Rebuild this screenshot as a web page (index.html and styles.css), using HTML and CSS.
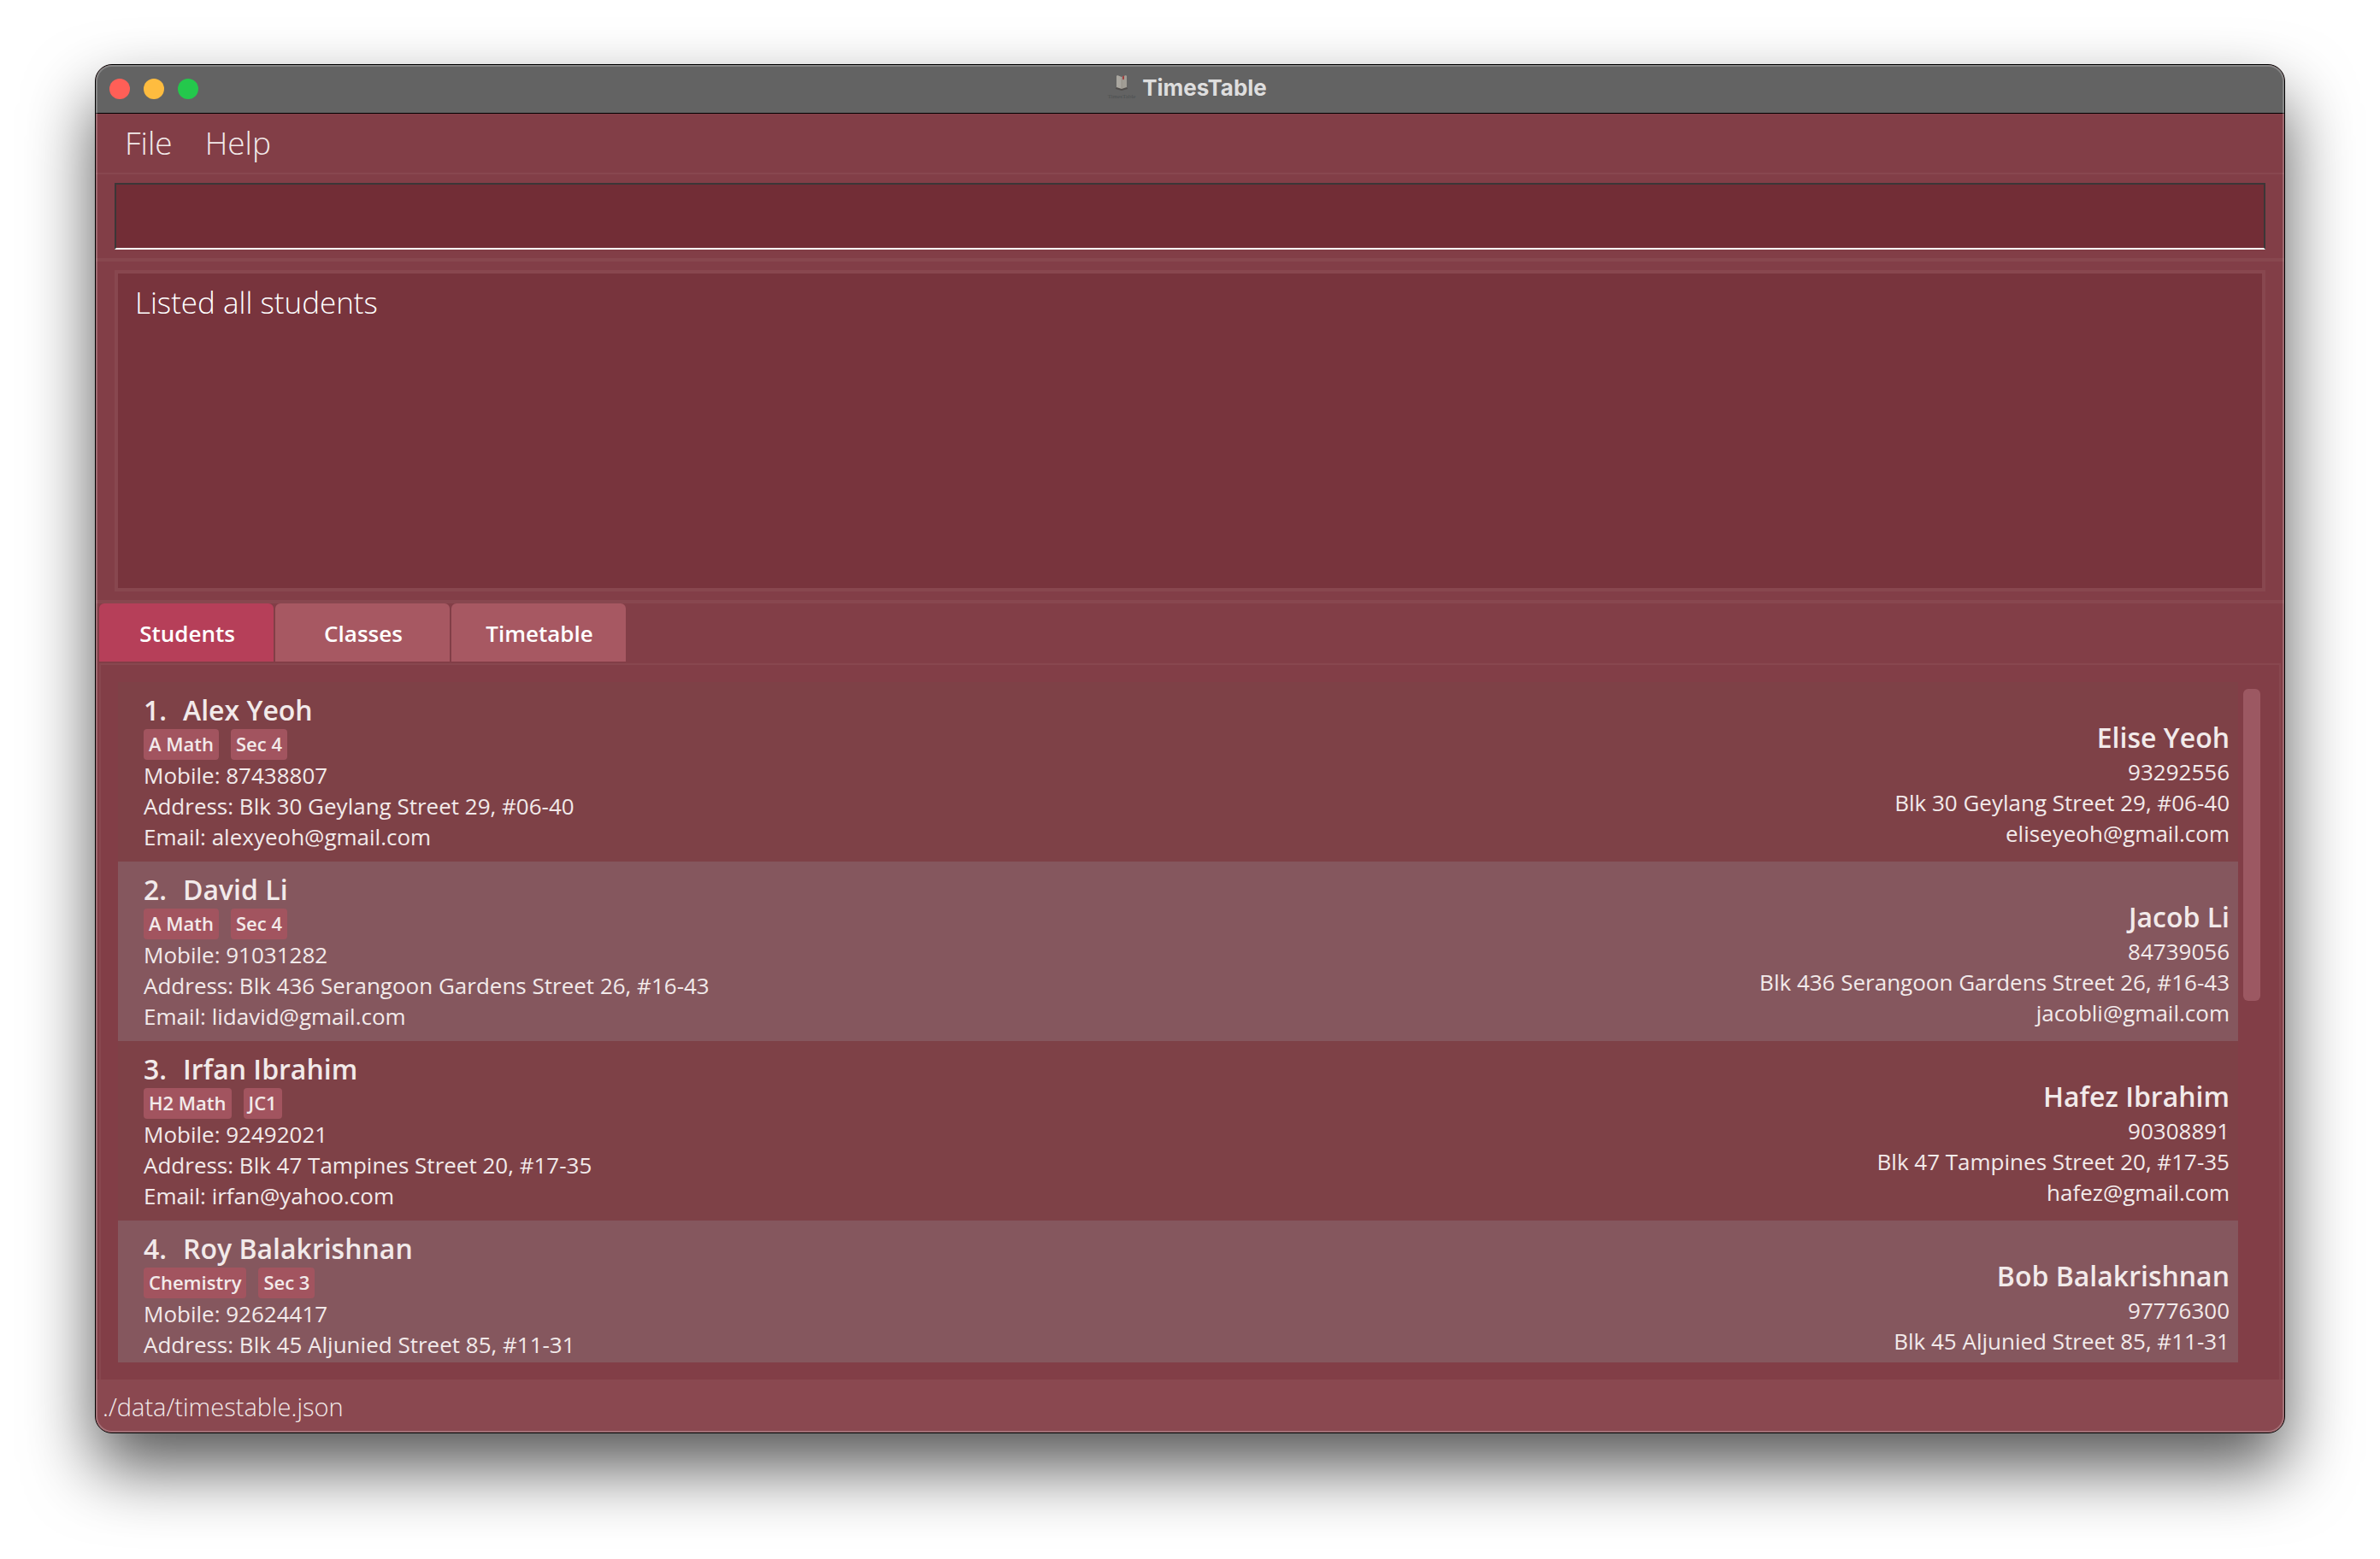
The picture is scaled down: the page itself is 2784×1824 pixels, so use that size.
FILE: index.html
```html
<!DOCTYPE html>
<html lang="en">
<head>
<meta charset="utf-8">
<title>TimesTable</title>
<link rel="stylesheet" href="styles.css">
</head>
<body>
<main class="window">
  <header class="titlebar">
    <div class="lights">
      <button class="light close" aria-label="Close"></button>
      <button class="light minimize" aria-label="Minimize"></button>
      <button class="light zoom" aria-label="Zoom"></button>
    </div>
    <h1 class="title">
      <span class="app-icon">
        <svg class="book" viewBox="0 0 14 18" aria-hidden="true">
          <path d="M0 15l2-1h10l2 1v1l-7 2-7-2z" fill="#504d4b"/>
          <path d="M1 1l1-1 5 2v14l-6-2z" fill="#aaa7a0"/>
          <path d="M13 1l-1-1-5 2v14l6-2z" fill="#a19d95"/>
          <path d="M6.700 2h.6v14h-.6z" fill="#8a867f"/>
          <path d="M8 1.500l2-1v5l-1-1-1 1z" fill="#a04040"/>
        </svg>
        <small class="icon-name">TimesTable</small>
      </span>
      TimesTable
    </h1>
  </header>
  <nav class="menubar">
    <button class="menu">File</button>
    <button class="menu">Help</button>
  </nav>
  <section class="command"><input class="command-box" type="text" aria-label="Command"></section>
  <section class="result"><textarea class="result-box" aria-label="Result" readonly>Listed all students</textarea></section>
  <div class="tabs" role="tablist">
    <button class="tab selected" role="tab" aria-selected="true">Students</button>
    <button class="tab" role="tab" aria-selected="false">Classes</button>
    <button class="tab" role="tab" aria-selected="false">Timetable</button>
  </div>
  <section class="panel">
    <ul class="list">
      <li class="row">
        <div class="student">
          <h2 class="name"><span class="index">1.</span>Alex Yeoh</h2>
          <div class="tags"><span class="tag">A Math</span><span class="tag">Sec 4</span></div>
          <p>Mobile: 87438807</p>
          <p>Address: Blk 30 Geylang Street 29, #06-40</p>
          <p>Email: alexyeoh@gmail.com</p>
        </div>
        <div class="kin">
          <h2 class="name">Elise Yeoh</h2>
          <p>93292556</p>
          <p>Blk 30 Geylang Street 29, #06-40</p>
          <p>eliseyeoh@gmail.com</p>
        </div>
      </li>
      <li class="row">
        <div class="student">
          <h2 class="name"><span class="index">2.</span>David Li</h2>
          <div class="tags"><span class="tag">A Math</span><span class="tag">Sec 4</span></div>
          <p>Mobile: 91031282</p>
          <p>Address: Blk 436 Serangoon Gardens Street 26, #16-43</p>
          <p>Email: lidavid@gmail.com</p>
        </div>
        <div class="kin">
          <h2 class="name">Jacob Li</h2>
          <p>84739056</p>
          <p>Blk 436 Serangoon Gardens Street 26, #16-43</p>
          <p>jacobli@gmail.com</p>
        </div>
      </li>
      <li class="row">
        <div class="student">
          <h2 class="name"><span class="index">3.</span>Irfan Ibrahim</h2>
          <div class="tags"><span class="tag">H2 Math</span><span class="tag">JC1</span></div>
          <p>Mobile: 92492021</p>
          <p>Address: Blk 47 Tampines Street 20, #17-35</p>
          <p>Email: irfan@yahoo.com</p>
        </div>
        <div class="kin">
          <h2 class="name">Hafez Ibrahim</h2>
          <p>90308891</p>
          <p>Blk 47 Tampines Street 20, #17-35</p>
          <p>hafez@gmail.com</p>
        </div>
      </li>
      <li class="row">
        <div class="student">
          <h2 class="name"><span class="index">4.</span>Roy Balakrishnan</h2>
          <div class="tags"><span class="tag">Chemistry</span><span class="tag">Sec 3</span></div>
          <p>Mobile: 92624417</p>
          <p>Address: Blk 45 Aljunied Street 85, #11-31</p>
        </div>
        <div class="kin">
          <h2 class="name">Bob Balakrishnan</h2>
          <p>97776300</p>
          <p>Blk 45 Aljunied Street 85, #11-31</p>
        </div>
      </li>
    </ul>
    <div class="scrollbar"><div class="thumb"></div></div>
  </section>
  <footer class="status">./data/timestable.json</footer>
</main>
</body>
</html>
```
FILE: styles.css
```css
* { box-sizing: border-box; margin: 0; padding: 0; }

body {
  height: 100vh;
  padding: 75px 111px 147px;
  display: flex;
  overflow: hidden;
  background: #fff;
  font-family: "Open Sans", "Noto Sans", sans-serif;
  color: #f2eaea;
}

button, input, textarea { border: 0; font: inherit; color: inherit; outline: 0; }

.window {
  position: relative;
  flex: 1;
  min-width: 0;
  display: flex;
  flex-direction: column;
  border: 1px solid #000;
  border-radius: 20px;
  overflow: hidden;
  background: #823e47;
  box-shadow: 0 40px 80px rgba(0, 0, 0, .66);
}

/* light rim drawn over the window edge */
.window::after {
  content: "";
  position: absolute;
  inset: 0;
  border: 2px solid rgba(255, 255, 255, .22);
  border-radius: 19px;
  pointer-events: none;
}

.titlebar {
  flex: none;
  height: 57px;
  padding: 0 16px;
  display: grid;
  grid-template-columns: 1fr auto 1fr;
  align-items: center;
  background: #636363;
  border-bottom: 1px solid #000;
}
.lights { display: flex; gap: 16px; }
.light { width: 24px; height: 24px; border-radius: 50%; }
.close { background: #ff5f57; }
.minimize { background: #febc3f; }
.zoom { background: #24c84c; }
.title {
  display: flex;
  align-items: center;
  gap: 8px;
  padding: 0 6px 2px 0;
  font: 700 26px/32px Inter, sans-serif;
  color: #dedede;
}
.app-icon { display: flex; flex-direction: column; align-items: center; gap: 2px; width: 32px; }
.book { width: 14px; height: 18px; }
.icon-name { font: 400 7px/10px "Liberation Serif", serif; color: #4c4f50; }

.menubar {
  flex: none;
  height: 71px;
  padding: 0 18px 2px;
  display: flex;
  align-items: center;
  border-bottom: 2px solid #88474f;
}
.menu { padding: 0 22px 0 16px; background: none; font-size: 37px; font-weight: 300; line-height: 50px; }

.command { flex: none; padding: 10px 22px; border-bottom: 4px solid #88474f; }
.command-box {
  display: block;
  width: 100%;
  height: 78px;
  padding: 0 16px;
  font-size: 35px;
  font-weight: 300;
  background: #722d36;
  border: 2px solid #3c3637;
  border-bottom-color: #fff;
}

.result { flex: none; padding: 10px 22px; border-bottom: 4px solid #88474f; }
.result-box {
  display: block;
  width: 100%;
  height: 376px;
  padding: 10px 20px;
  resize: none;
  overflow: hidden;
  font-size: 35px;
  font-weight: 300;
  line-height: 48px;
  color: #fff;
  background: #78343d;
  border: 4px solid #88474f;
}

.tabs { flex: none; display: flex; gap: 2px; padding: 0 4px 2px; }
.tab {
  width: 204px;
  height: 68px;
  padding: 2px 0 0 2px;
  border-radius: 6px 6px 0 0;
  background: #a75862;
  color: #fff;
  font-size: 26px;
  font-weight: 600;
}
.selected { background: #b63f59; }

.panel {
  flex: 1;
  min-height: 0;
  margin: 0 4px;
  padding: 20px;
  display: flex;
  gap: 6px;
  border: 2px solid #88474f;
  border-bottom: 0;
}
.list { flex: 1; overflow: hidden; list-style: none; }
.row {
  height: 210px;
  display: flex;
  justify-content: space-between;
  padding: 11px 10px 11px 30px;
  font-size: 26px;
  line-height: 36px;
  background: #7e4147;
}
.row:nth-child(even) { background: #85575e; }
.kin { padding-top: 32px; text-align: right; }
.name { font-size: 32px; font-weight: 600; line-height: 44px; }
.index { display: inline-block; width: 46px; }
.tags { display: flex; gap: 14px; }
.tag {
  padding: 0 6px 2px;
  border-radius: 4px;
  background: #a2545f;
  font-size: 22px;
  font-weight: 600;
  line-height: 34px;
}
.scrollbar { width: 22px; padding: 8px 2px 12px 0; }
.thumb { height: 47%; border-radius: 6px; background: #9c5862; }

.status {
  flex: none;
  height: 62px;
  padding: 2px 8px 0;
  background: #8a4850;
  font-size: 29px;
  font-weight: 300;
  line-height: 60px;
}
```
